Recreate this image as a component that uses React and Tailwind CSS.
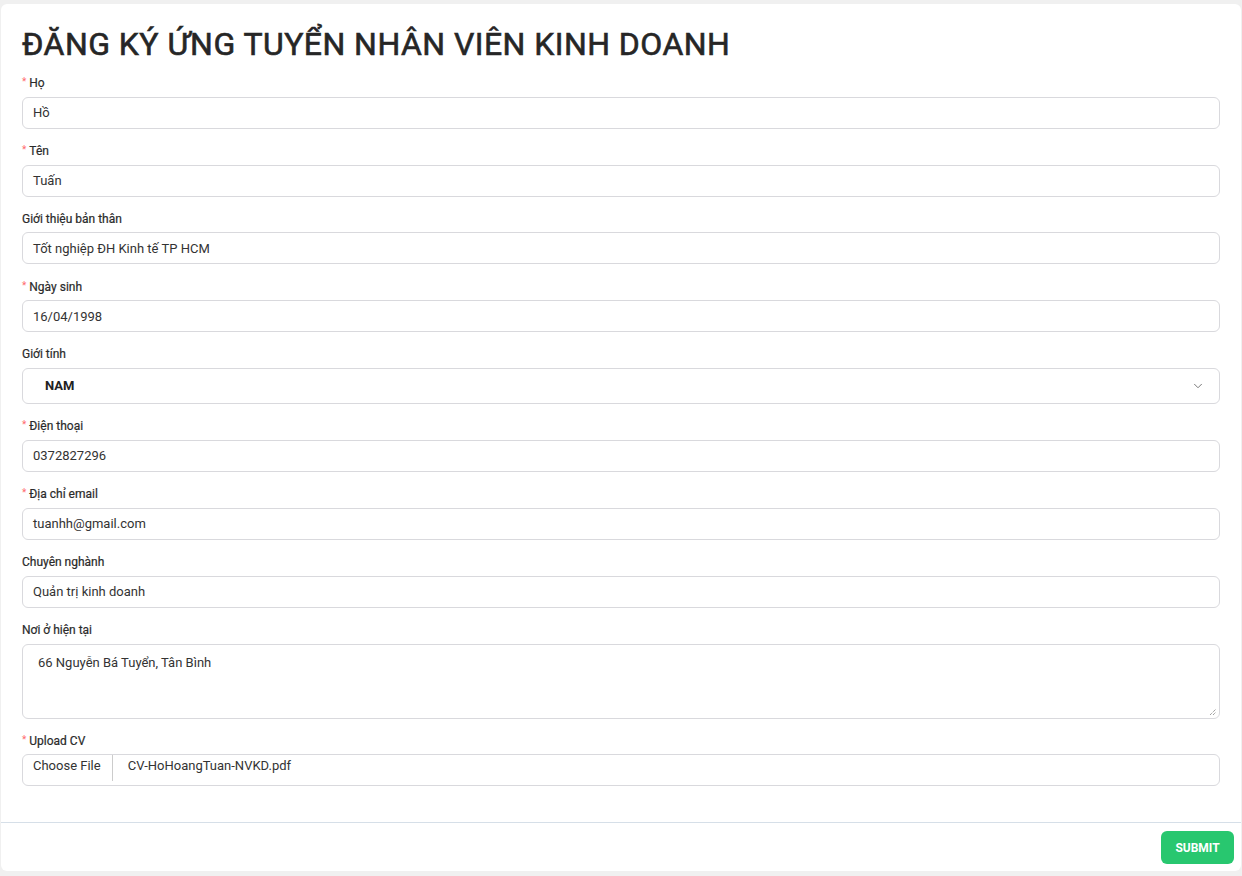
import { ChevronDown } from 'lucide-react'

const fields = [
  { key: 'ho', label: 'Họ', required: true, value: 'Hồ' },
  { key: 'ten', label: 'Tên', required: true, value: 'Tuấn' },
  { key: 'gioithieu', label: 'Giới thiệu bản thân', value: 'Tốt nghiệp ĐH Kinh tế TP HCM' },
  { key: 'ngaysinh', label: 'Ngày sinh', required: true, value: '16/04/1998' },
  { key: 'gioitinh', label: 'Giới tính', type: 'select', value: 'NAM' },
  { key: 'dienthoai', label: 'Điện thoại', required: true, value: '0372827296' },
  { key: 'email', label: 'Địa chỉ email', required: true, value: 'tuanhh@gmail.com' },
  { key: 'chuyennganh', label: 'Chuyên nghành', value: 'Quản trị kinh doanh' },
  { key: 'noio', label: 'Nơi ở hiện tại', type: 'textarea', value: '66 Nguyễn Bá Tuyển, Tân Bình' },
  { key: 'cv', label: 'Upload CV', required: true, type: 'file', value: 'CV-HoHoangTuan-NVKD.pdf' },
]

function FieldLabel({ label, required }) {
  return (
    <div className="flex items-center text-[12px] leading-[16.67px] font-normal text-[#2a2a2a] [-webkit-text-stroke:0.2px_#2a2a2a] mb-[5px]">
      {required && <span className="text-[#ff6b6b] text-[10px] mr-[3px] relative -top-[1px] [-webkit-text-stroke:0]">*</span>}
      {label}
    </div>
  )
}

function Control({ f }) {
  const box = 'w-full border border-[#d9d9dd] rounded-[6px] bg-white text-[13px] text-[#333]'
  if (f.type === 'select') {
    return (
      <div className={`${box} h-9 flex items-center justify-between pl-[22px] pr-[14px]`}>
        <span className="font-bold text-[#222]">{f.value}</span>
        <ChevronDown size={14} strokeWidth={1.5} className="text-[#666]" />
      </div>
    )
  }
  if (f.type === 'textarea') {
    return (
      <div className={`${box} h-[75px] relative pl-[15px] pt-[8px]`}>
        {f.value}
        <svg className="absolute right-[2px] bottom-[2px]" width="8" height="8" viewBox="0 0 8 8">
          <path d="M1 7 L7 1 M4 7 L7 4" stroke="#777" strokeWidth="1" strokeDasharray="1 1" />
        </svg>
      </div>
    )
  }
  if (f.type === 'file') {
    return (
      <div className={`${box} h-8 flex items-start`}>
        <span className="pl-[10px] pr-[11px] pt-[2px] leading-[18px] border-r border-[#ccc] h-[26px]">Choose File</span>
        <span className="pl-[15px] pt-[2px] leading-[18px]">{f.value}</span>
      </div>
    )
  }
  return <div className={`${box} h-8 flex items-center px-[10px]`}>{f.value}</div>
}

export default function App() {
  return (
    <div className="min-h-[876px] bg-[#f0f0f0] pt-1 pl-px pr-px" style={{ fontFamily: 'Roboto, "Noto Sans", sans-serif' }}>
      <div className="bg-white rounded-[6px] w-[1240px] h-[867px] flex flex-col">
        <div className="px-[21px] pt-[20px]">
          <h1 className="text-[32px] leading-[40px] font-normal text-[#262626] [-webkit-text-stroke:0.6px_#262626] tracking-[0.45px] mb-[11px]">
            ĐĂNG KÝ ỨNG TUYỂN NHÂN VIÊN KINH DOANH
          </h1>
          {fields.map((f) => (
            <div key={f.key} className="mb-[14.2px]">
              <FieldLabel label={f.label} required={f.required} />
              <Control f={f} />
            </div>
          ))}
        </div>
        <div className="mt-auto border-t border-[#d6dfe8] flex justify-end px-[7px] pt-[8px] pb-[7px]">
          <button className="bg-[#28c76f] text-white text-[12px] font-bold rounded-[6px] w-[73px] h-[33px]">
            SUBMIT
          </button>
        </div>
      </div>
    </div>
  )
}
